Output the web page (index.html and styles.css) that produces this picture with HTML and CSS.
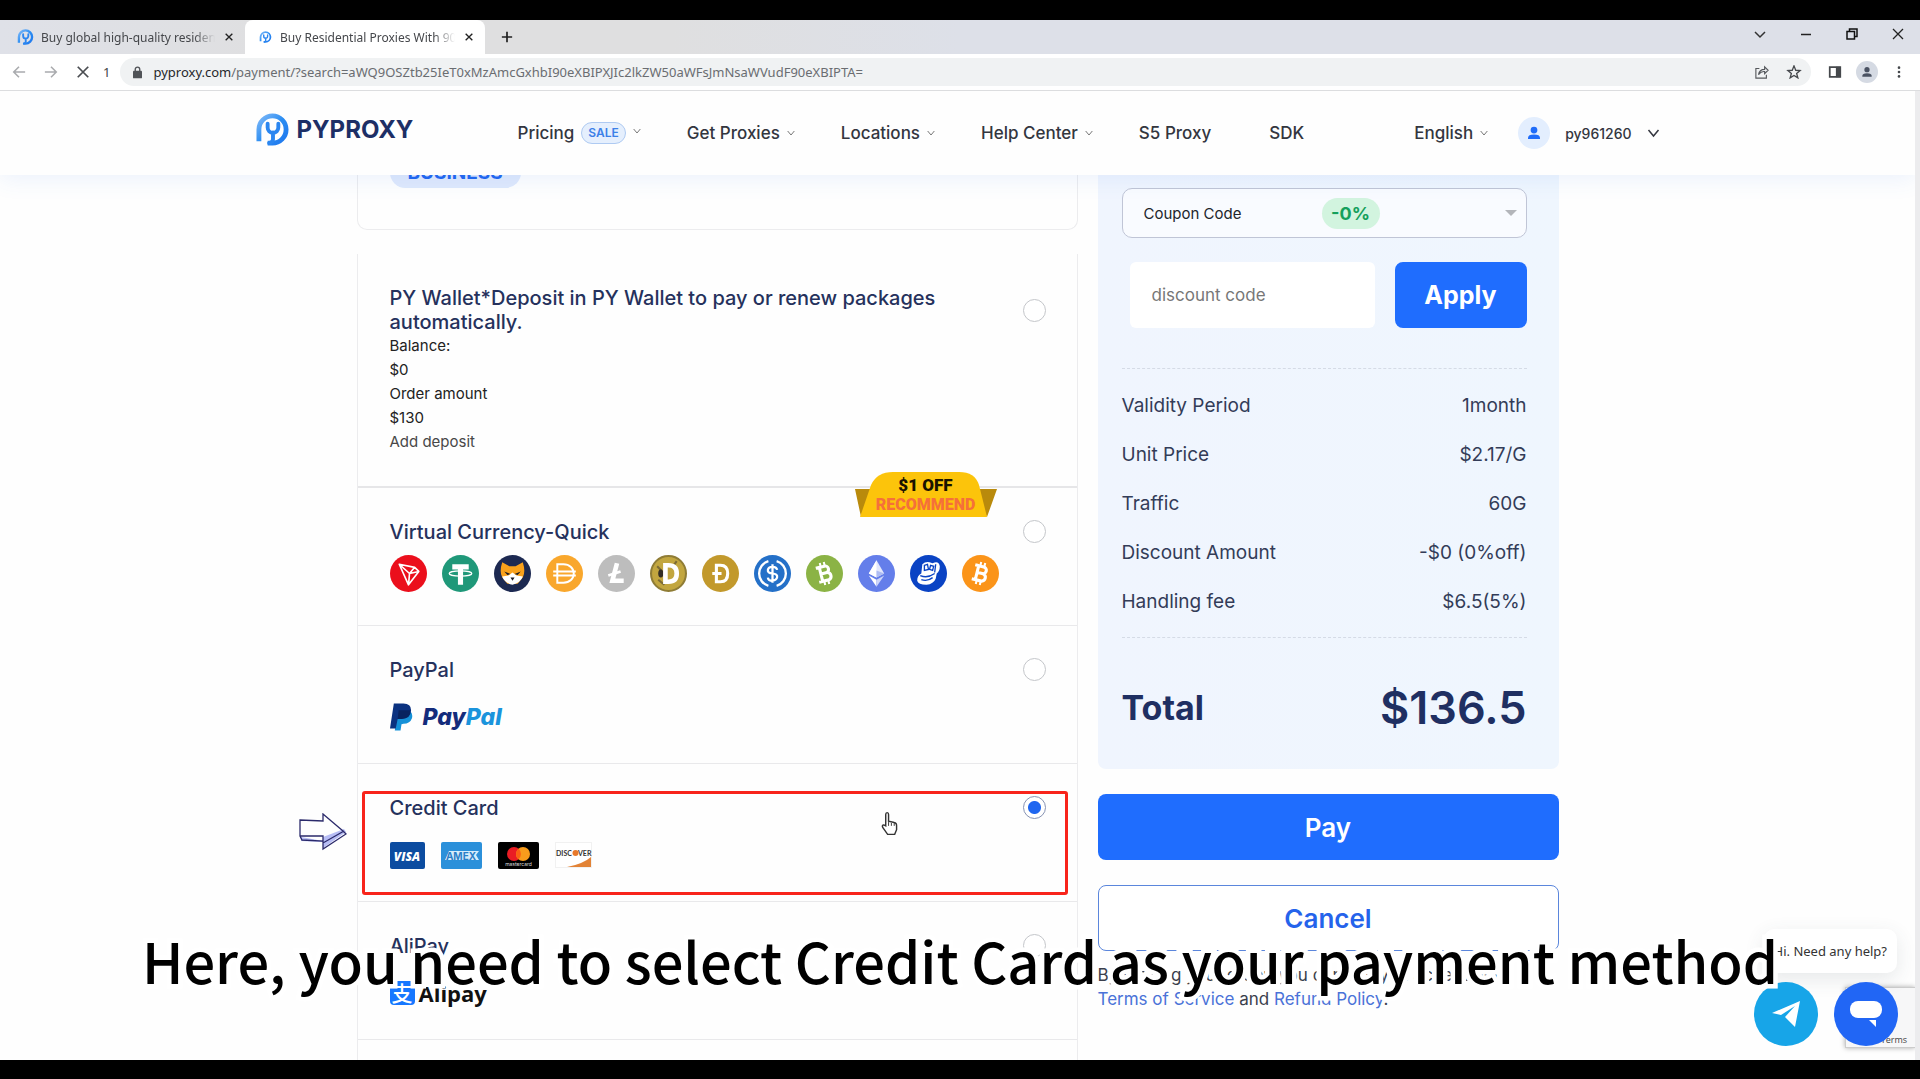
FILE: index.html
```html
<!DOCTYPE html>
<html lang="en">
<head>
    <meta charset="UTF-8">
    <meta name="viewport" content="width=device-width, initial-scale=1.0">
    <title>Buy Residential Proxies With 90M+ IPs</title>
    <link rel="stylesheet" href="styles.css">
</head>
<body>

    <!-- Shared icons -->
    <svg class="sprite" aria-hidden="true">
        <defs>
            <linearGradient id="logoBlue" x1="0" y1="0" x2="1" y2="1">
                <stop offset="0" stop-color="#7db8f8"/>
                <stop offset="0.5" stop-color="#2b8df2"/>
                <stop offset="1" stop-color="#1f78ee"/>
            </linearGradient>
        </defs>
        <symbol id="py" viewBox="0 0 34 34">
            <path d="M3 29V17a14 14 0 1 1 14 14h-5" fill="none" stroke="url(#logoBlue)" stroke-width="5"/>
            <path d="M12 11v4a5.500 5.500 0 0 0 11 0v-4M17.500 20v7q0 3-4 4" fill="none" stroke="#2b86f0" stroke-width="4" stroke-linecap="round"/>
        </symbol>
        <symbol id="chevron" viewBox="0 0 12 12">
            <path d="M1 3l5 6 5-6" fill="none" stroke="currentColor" stroke-width="1.500"/>
        </symbol>
        <symbol id="close" viewBox="0 0 12 12">
            <path d="M1 1l10 10M11 1L1 11" fill="none" stroke="currentColor" stroke-width="2"/>
        </symbol>
        <symbol id="person" viewBox="0 0 24 24">
            <circle cx="12" cy="8" r="4.500" fill="currentColor"/>
            <path d="M4 20v-1.500q0-4.500 8-4.500t8 4.500V20z" fill="currentColor"/>
        </symbol>
    </svg>

    <div class="browser">
        <div class="tabs">
            <div class="tab">
                <svg class="tab-icon"><use href="#py"/></svg>
                <span class="tab-title">Buy global high-quality residential</span>
                <button class="tab-close" aria-label="Close tab"><svg><use href="#close"/></svg></button>
            </div>
            <div class="tab active">
                <svg class="tab-icon small"><use href="#py"/></svg>
                <span class="tab-title">Buy Residential Proxies With 90M+</span>
                <button class="tab-close" aria-label="Close tab"><svg><use href="#close"/></svg></button>
            </div>
            <button class="new-tab" aria-label="New tab">
                <svg viewBox="0 0 14 14"><path d="M7 1v12M1 7h12" stroke="#222" stroke-width="2"/></svg>
            </button>
            <div class="window-btns">
                <button aria-label="Search tabs"><svg viewBox="0 0 12 12"><path d="M1 4l5 5 5-5" fill="none" stroke="#333" stroke-width="1.500"/></svg></button>
                <button aria-label="Minimize"><svg viewBox="0 0 12 12"><path d="M1 6.500h10" stroke="#222" stroke-width="1.500"/></svg></button>
                <button aria-label="Restore"><svg viewBox="0 0 12 12"><path d="M1 3.500h7.500V11H1zM3.500 3.500V1H11v7.500H8.500" fill="none" stroke="#111" stroke-width="1.500"/></svg></button>
                <button aria-label="Close"><svg viewBox="0 0 12 12"><path d="M1 1l10 10M11 1L1 11" stroke="#222" stroke-width="1.300"/></svg></button>
            </div>
        </div>

        <div class="toolbar">
            <button class="tool-btn" aria-label="Back"><svg viewBox="0 0 16 16"><path d="M15 8H2M8 2L2 8l6 6" fill="none" stroke="#a9abae" stroke-width="1.800"/></svg></button>
            <button class="tool-btn" aria-label="Forward"><svg viewBox="0 0 16 16"><path d="M1 8h13M8 2l6 6-6 6" fill="none" stroke="#a9abae" stroke-width="1.800"/></svg></button>
            <button class="tool-btn" aria-label="Stop"><svg viewBox="0 0 16 16"><path d="M2 2l12 12M14 2L2 14" stroke="#4a4d51" stroke-width="2"/></svg></button>
            <span class="tool-num">1</span>
            <div class="url-bar">
                <svg class="lock" viewBox="0 0 10 14"><path d="M2.500 6V3.500a2.500 2.500 0 0 1 5 0V6" fill="none" stroke="#505357" stroke-width="1.500"/><rect x="0" y="5" width="10" height="8.500" rx="1" fill="#505357"/></svg>
                <span class="url"><b>pyproxy.com</b>/payment/?search=aWQ9OSZtb25IeT0xMzAmcGxhbI90eXBIPXJIc2lkZW50aWFsJmNsaWVudF90eXBIPTA=</span>
                <button class="tool-btn" aria-label="Share"><svg viewBox="0 0 16 16"><path d="M5 4H1v11h12v-4M4 11q1-6 7-6V2l4 4-4 4V7.500Q7 7 4 11z" fill="none" stroke="#55585c" stroke-width="1.300"/></svg></button>
                <button class="tool-btn" aria-label="Bookmark"><svg viewBox="0 0 16 16"><path d="M8 1l2 5 5 .3-4 3.400 1.400 5L8 12l-4.400 2.700 1.400-5-4-3.400L6 6z" fill="none" stroke="#45484c" stroke-width="1.500"/></svg></button>
            </div>
            <button class="tool-btn" aria-label="Side panel"><svg viewBox="0 0 16 16"><path d="M2 2.500h12v11H2z" fill="none" stroke="#45484c" stroke-width="2"/><path d="M9 2h5v12H9z" fill="#45484c"/></svg></button>
            <button class="tool-btn profile" aria-label="Profile"><svg><use href="#person"/></svg></button>
            <button class="tool-btn" aria-label="Menu"><svg viewBox="0 0 16 16" fill="#45484c"><circle cx="8" cy="3" r="1.500"/><circle cx="8" cy="8" r="1.500"/><circle cx="8" cy="13" r="1.500"/></svg></button>
        </div>

        <div class="page">
            <header class="site-header">
                <div class="header-inner">
                    <a href="#" class="logo"><svg><use href="#py"/></svg>PYPROXY</a>
                    <nav class="nav">
                        <a href="#">Pricing <span class="sale">SALE</span> <svg class="chev up"><use href="#chevron"/></svg></a>
                        <a href="#">Get Proxies <svg class="chev"><use href="#chevron"/></svg></a>
                        <a href="#">Locations <svg class="chev"><use href="#chevron"/></svg></a>
                        <a href="#">Help Center <svg class="chev"><use href="#chevron"/></svg></a>
                        <a href="#" class="plain">S5 Proxy</a>
                        <a href="#">SDK</a>
                    </nav>
                    <a href="#" class="lang">English <svg class="chev"><use href="#chevron"/></svg></a>
                    <a href="#" class="user"><span class="avatar"><svg><use href="#person"/></svg></span>py961260 <svg class="user-chev"><use href="#chevron"/></svg></a>
                </div>
            </header>

            <main class="checkout">
                <section class="methods">
                    <div class="plan-card">
                        <span class="plan-badge">BUSINESS</span>
                    </div>

                    <form class="pay-list">
                        <label class="pay-row wallet">
                            <span class="pay-body">
                                <span class="pay-name">PY Wallet*Deposit in PY Wallet to pay or renew packages automatically.</span>
                                <span class="pay-line">Balance:</span>
                                <span class="pay-line">$0</span>
                                <span class="pay-line">Order amount</span>
                                <span class="pay-line">$130</span>
                                <a href="#" class="pay-line deposit">Add deposit</a>
                            </span>
                            <input type="radio" name="method">
                        </label>

                        <label class="pay-row crypto">
                            <span class="pay-body">
                                <span class="pay-name">Virtual Currency-Quick</span>
                                <span class="coins">
                                    <svg viewBox="0 0 36 36"><circle cx="18" cy="18" r="18" fill="#eb0f1c"/><path d="M9 9l15 3 4 4-10 13zM9 9l10 9 5-6M19 18l-1 11M19 18l9-2" fill="none" stroke="#fff" stroke-width="1.600" stroke-linejoin="round"/></svg>
                                    <svg viewBox="0 0 36 36"><circle cx="18" cy="18" r="18" fill="#1f9879"/><path d="M10 9h16v5h-5.500v15h-5V14H10z" fill="#fff"/><ellipse cx="18" cy="18" rx="11" ry="2.500" fill="none" stroke="#fff" stroke-width="1.200"/></svg>
                                    <svg viewBox="0 0 36 36"><circle cx="18" cy="18" r="18" fill="#1c2951"/><path d="M8 7l7 4h6l7-4q3 9 0 15l-5 6H13l-5-6Q5 16 8 7z" fill="#f9a11b"/><path d="M8 21l6-1 4-3 4 3 6 1q-2 6-10 8-8-2-10-8z" fill="#fff"/><path d="M10 16l6 2.500-3 1zM26 16l-6 2.500 3 1zM16 22h4l-2 3z" fill="#1b1b24"/></svg>
                                    <svg viewBox="0 0 36 36"><circle cx="18" cy="18" r="18" fill="#f9a72c"/><path d="M11 9h6c6 0 10 4 10 9s-4 9-10 9h-6zM7 16h22M7 20h22" fill="none" stroke="#fff" stroke-width="1.900"/></svg>
                                    <svg viewBox="0 0 36 36"><circle cx="18" cy="18" r="18" fill="#bdbdbd"/><path d="M18.500 8L14 25h11" fill="none" stroke="#fff" stroke-width="4.500"/><path d="M10 20l12-4" stroke="#fff" stroke-width="2.500"/></svg>
                                    <svg viewBox="0 0 36 36"><circle cx="18" cy="18" r="17" fill="#c2a63f" stroke="#8f7c35" stroke-width="2"/><path d="M7 11l4 4M26 6l-3 4M8 24l6 5" stroke="#7c6b35" stroke-width="2"/><ellipse cx="10.500" cy="18" rx="2.500" ry="4" fill="#342e25"/><path d="M15 10h3c6 0 8 3 8 8s-2 8-8 8h-3z" fill="none" stroke="#fff" stroke-width="4.500"/></svg>
                                    <svg viewBox="0 0 36 36"><circle cx="18" cy="18" r="18" fill="#c2992c"/><path d="M14 10h4c5 0 7 3 7 8s-2 8-7 8h-4zM10 18h9" fill="none" stroke="#fff" stroke-width="3"/></svg>
                                    <svg viewBox="0 0 36 36"><circle cx="18" cy="18" r="18" fill="#2470c8"/><path d="M14 6a12.500 12.500 0 0 0 0 24M22 6a12.500 12.500 0 0 1 0 24" fill="none" stroke="#fff" stroke-width="2.300"/><path d="M22.500 14.500q-.5-3-4.500-3t-4.500 3 4.500 3.500 4.500 3.500-4.500 3.500-4.500-3M18 9v18" fill="none" stroke="#fff" stroke-width="2.200"/></svg>
                                    <svg viewBox="0 0 36 36"><circle cx="18" cy="18" r="18" fill="#8bb345"/><g transform="rotate(-14 18 18)" fill="none" stroke="#fff" stroke-width="3"><path d="M14.500 11h5a3.300 3.300 0 0 1 0 6.700h-5zM14.500 17.700h6a3.700 3.700 0 0 1 0 7.300h-6zM11 11h4M11 25h4"/><path d="M16 7v4M20 7v4M16 25v4M20 25v4" stroke-width="2"/></g></svg>
                                    <svg viewBox="0 0 36 36"><circle cx="18" cy="18" r="18" fill="#647eea"/><path d="M18 5l7.500 13-7.500 4-7.500-4z" fill="#e2e7fc"/><path d="M18 5v17l-7.500-4zM10.500 20l7.500 4v7z" fill="#fff"/><path d="M25.500 20L18 24v7z" fill="#ccd5fa"/><path d="M18 15l7.500 3-7.500 4z" fill="#aebcf3"/></svg>
                                    <svg viewBox="0 0 36 36"><circle cx="18" cy="18" r="18" fill="#0a43c4"/><path d="M12 9q3-3 7-2l3 1q6-3 7 3 0 5-3 7l-1 5q-2 5-9 6-8 0-9-4 0-5 4-7z" fill="#fff"/><path d="M14 10l3-1 1 5-4 1zM20 10l3 1-1 4-3-1zM10 20q7 3 14-2M11 24q6 2 11-2M25 9l-1 8" fill="none" stroke="#0a43c4" stroke-width="1.300"/></svg>
                                    <svg viewBox="0 0 36 36"><circle cx="18" cy="18" r="18" fill="#fb9419"/><g transform="rotate(14 18 18)" fill="none" stroke="#fff" stroke-width="3"><path d="M14.500 11h5a3.300 3.300 0 0 1 0 6.700h-5zM14.500 17.700h6a3.700 3.700 0 0 1 0 7.300h-6zM11 11h4M11 25h4"/><path d="M16 7v4M20 7v4M16 25v4M20 25v4" stroke-width="2"/></g></svg>
                                </span>
                            </span>
                            <input type="radio" name="method">
                            <span class="ribbon">
                                <svg viewBox="0 0 142 46" aria-hidden="true">
                                    <path d="M0 18h24L6 46zM142 18h-24l14 28z" fill="#b98a0c"/>
                                    <path d="M5 46L16 14Q22 1 38 1h66q16 0 20 13l8 32z" fill="#fcc40b"/>
                                </svg>
                                <span class="ribbon-off">$1 OFF</span>
                                <span class="ribbon-rec">RECOMMEND</span>
                            </span>
                        </label>

                        <label class="pay-row">
                            <span class="pay-body">
                                <span class="pay-name">PayPal</span>
                                <span class="brand paypal">
                                    <svg viewBox="0 0 24 28" aria-hidden="true"><path d="M8 7h12q4 3 3 8-2 6-9 6l-2 .5L11 28H5z" fill="#1591d8"/><path d="M4 0h10q8 0 8 7 0 8-10 9H8L6 26H0z" fill="#0b3280"/><path d="M9 7h12q1 9-9 9H8z" fill="#08235f"/></svg>
                                    <i>Pay<em>Pal</em></i>
                                </span>
                            </span>
                            <input type="radio" name="method">
                        </label>

                        <label class="pay-row credit">
                            <span class="pay-body">
                                <span class="pay-name">Credit Card</span>
                                <span class="brand cards">
                                    <svg class="card-visa" viewBox="0 0 35 27"><rect width="35" height="27" rx="2" fill="#0c4ca0"/><text x="17" y="19" text-anchor="middle" class="visa-text">VISA</text></svg>
                                    <svg class="card-wide" viewBox="0 0 41 27"><rect width="41" height="27" rx="2" fill="#2b90da"/><path d="M8 9h30l-3 4 3 5H4z" fill="#d6ecfb"/><text x="20" y="18" text-anchor="middle" class="amex-text">AMEX</text></svg>
                                    <svg class="card-wide" viewBox="0 0 41 27"><rect width="41" height="27" rx="2"/><circle cx="16" cy="12" r="7" fill="#ea1c24"/><circle cx="25" cy="12" r="7" fill="#f89c1c"/><path d="M20.500 6.700a7 7 0 0 1 0 10.600 7 7 0 0 1 0-10.600z" fill="#fb5f13"/><text x="20.500" y="24" text-anchor="middle" class="mc-text">mastercard</text></svg>
                                    <svg class="card-disc" viewBox="0 0 37 27"><rect x=".5" y=".5" width="36" height="25" fill="#fff" stroke="#f1f1f1"/><text x="1" y="14" class="disc-text">DISC</text><circle cx="20.500" cy="11" r="3" fill="#e8792b"/><text x="23" y="14" class="disc-text">VER</text><path d="M12 25q16-3 24-10v10z" fill="#e28336"/></svg>
                                </span>
                            </span>
                            <input type="radio" name="method" checked>
                            <span class="highlight"></span>
                            <svg class="pointer-arrow" viewBox="0 0 48 38" aria-hidden="true"><path d="M2 24v4l22 1v-5l21-8 2 3-23 16V28" fill="#b7bdf5"/><path d="M1 7l23 1V1l20 17 3 3-23 15v-8L3 27l-2-4zM1 23h23v7l21-12" fill="none" stroke="#2b2a6b" stroke-width="1.300"/></svg>
                            <svg class="hand" viewBox="0 0 18 25" aria-hidden="true"><path d="M5 15V3q0-2 1.500-2T8 3v7l6 1.500q2.500.5 2.500 3V19l-2 5H7l-5-7q-1.500-3 1-3z" fill="#fff" stroke="#333" stroke-width="1.500"/><path d="M8 15v-4M11 15v-3M14 15v-3" stroke="#333"/></svg>
                        </label>

                        <label class="pay-row">
                            <span class="pay-body">
                                <span class="pay-name">AliPay</span>
                                <span class="brand alipay"><b class="ali-mark">支</b>Alipay</span>
                            </span>
                            <input type="radio" name="method">
                        </label>
                    </form>
                </section>

                <aside class="summary">
                    <div class="order">
                        <button class="coupon">
                            <span>Coupon Code</span>
                            <span class="percent">-0%</span>
                            <svg class="caret" viewBox="0 0 12 6"><path d="M0 0h12L6 6z" fill="#b3b5ba"/></svg>
                        </button>
                        <div class="discount">
                            <input type="text" placeholder="discount code" aria-label="discount code">
                            <button class="apply">Apply</button>
                        </div>
                        <dl class="details">
                            <div><dt>Validity Period</dt><dd>1month</dd></div>
                            <div><dt>Unit Price</dt><dd>$2.17/G</dd></div>
                            <div><dt>Traffic</dt><dd>60G</dd></div>
                            <div><dt>Discount Amount</dt><dd>-$0 (0%off)</dd></div>
                            <div><dt>Handling fee</dt><dd>$6.5(5%)</dd></div>
                        </dl>
                        <div class="total"><span>Total</span><strong>$136.5</strong></div>
                    </div>
                    <button class="pay-btn">Pay</button>
                    <button class="cancel-btn">Cancel</button>
                    <p class="terms">By making your order, you confirm you accept our <a href="#">Terms of Service</a> and <a href="#">Refund Policy</a>.</p>
                </aside>
            </main>

            <div class="recaptcha">Terms</div>
            <div class="help-bubble">Hi. Need any help?</div>
            <div class="help-btns">
                <a href="#" class="telegram" aria-label="Telegram"><svg viewBox="0 0 30 28"><path d="M1 13L29 1l-5 26-10-10 10-11-14 9z" fill="#fff"/></svg></a>
                <button class="chat" aria-label="Chat"><svg viewBox="0 0 32 28"><rect x="0" y="1" width="32" height="17" rx="8" fill="#fff"/><path d="M19 20h7v7z" fill="#fff"/></svg></button>
            </div>
        </div>
    </div>

    <p class="caption">Here, you need to select Credit Card as your payment method</p>

</body>
</html>
```
FILE: styles.css
```css
* {
    box-sizing: border-box;
}

body {
    font-family: Inter, "Open Sans", sans-serif;
    background-color: #000;
    color: #222b45;
    margin: 0;
    height: 100vh;
    padding: 20px 0 19px;
    overflow: hidden;
}

button {
    font-family: inherit;
    border: none;
    background: none;
    padding: 0;
    cursor: pointer;
}

a {
    color: inherit;
    text-decoration: none;
}

svg {
    display: block;
    flex: none;
}

.sprite {
    position: absolute;
    width: 0;
    height: 0;
}

.browser {
    height: 100%;
    display: flex;
    flex-direction: column;
    background-color: #fefefe;
    overflow: hidden;
}

/* Tab strip */
.tabs {
    display: flex;
    align-items: center;
    height: 34px;
    background: linear-gradient(90deg, #dfe1e8, #dfdfe0 15%, #dfdfe0 35%, #dde0e8 50%);
    font-family: "Noto Sans", sans-serif;
    font-size: 12px;
    color: #45474b;
}

.tab {
    display: flex;
    align-items: center;
    width: 245px;
    height: 34px;
    padding: 0 9px 0 17px;
    gap: 7px;
}

.tab.active {
    background-color: #fff;
    border-radius: 8px 8px 0 0;
    width: 240px;
    padding-left: 13px;
}

.tab-icon {
    width: 17px;
    height: 16px;
}

.tab-icon.small {
    width: 15px;
    height: 12px;
}

.tab-title {
    flex: 1;
    overflow: hidden;
    white-space: nowrap;
    -webkit-mask-image: linear-gradient(90deg, #000 88%, transparent);
    mask-image: linear-gradient(90deg, #000 88%, transparent);
}

.tab-close {
    width: 14px;
    display: flex;
    justify-content: center;
    color: #222;
}

.tab-close svg {
    width: 8px;
    height: 8px;
}

.new-tab {
    width: 44px;
    display: flex;
    justify-content: center;
}

.new-tab svg {
    width: 12px;
    height: 12px;
}

.window-btns {
    display: flex;
    margin-left: auto;
    gap: 34px;
    padding: 0 16px 6px 0;
}

.window-btns svg {
    width: 12px;
    height: 12px;
}

/* Toolbar */
.toolbar {
    display: flex;
    align-items: center;
    height: 37px;
    background-color: #fff;
    border-bottom: 1px solid #dcdddf;
    padding: 0 13px 0 11px;
    gap: 16px;
}

.tool-btn svg {
    width: 16px;
    height: 14px;
}

.tool-num {
    font-family: "Noto Sans", sans-serif;
    font-size: 13px;
    color: #444;
    margin: 0 -6px 0 -4px;
}

.url-bar {
    flex: 1;
    display: flex;
    align-items: center;
    gap: 16px;
    height: 28px;
    padding: 0 9px 0 13px;
    border-radius: 14px;
    background-color: #f0f2f3;
}

.lock {
    width: 9px;
    height: 13px;
}

.url {
    flex: 1;
    font-family: "Noto Sans", sans-serif;
    font-size: 13px;
    color: #6a6d71;
    margin-left: -5px;
    white-space: nowrap;
    overflow: hidden;
}

.url b {
    font-weight: normal;
    color: #26282b;
}

.profile {
    width: 22px;
    height: 22px;
    border-radius: 50%;
    background-color: #d5dae3;
    color: #4a5262;
    display: flex;
    align-items: center;
    justify-content: center;
    margin: 0 -3px;
}

/* Page area */
.page {
    flex: 1;
    min-height: 0;
    position: relative;
    overflow: hidden;
    border-right: 5px solid #ececee;
}

.site-header {
    position: relative;
    z-index: 1;
    height: 84px;
    background-color: #fefefe;
    box-shadow: 0 4px 22px rgba(70, 130, 240, 0.1);
}

.header-inner {
    display: flex;
    align-items: center;
    max-width: 1404px;
    height: 84px;
    margin: 0 auto;
    font-size: 17px;
    font-weight: 500;
    color: #33363f;
}

.logo {
    display: flex;
    align-items: center;
    gap: 8px;
    width: 262px;
    font-size: 24px;
    font-weight: 700;
    color: #1d2f66;
    padding-bottom: 7px;
}

.logo svg {
    width: 33px;
    height: 33px;
}

.nav {
    display: flex;
    gap: 46px;
}

.nav a, .lang, .user {
    display: flex;
    align-items: center;
    gap: 7px;
}

.nav .plain {
    margin-right: 12px;
}

.sale {
    font-size: 12px;
    font-weight: 600;
    line-height: 20px;
    padding: 0 6px;
    color: #3c80e8;
    background-color: #e5effd;
    border: 1px solid #aecaf2;
    border-radius: 12px;
}

.chev {
    width: 8px;
    height: 8px;
    color: #777;
}

.chev.up {
    margin-bottom: 4px;
}

.lang {
    margin-left: auto;
    margin-right: 30px;
}

.user {
    font-size: 14px;
    font-weight: 500;
    gap: 15px;
}

.avatar {
    width: 32px;
    height: 32px;
    border-radius: 50%;
    background-color: #e3eefe;
    color: #1f6cf9;
    display: flex;
    align-items: center;
    justify-content: center;
}

.avatar svg {
    width: 20px;
    height: 18px;
}

.user-chev {
    width: 13px;
    height: 12px;
}

/* Checkout */
.checkout {
    display: grid;
    grid-template-columns: minmax(0, 721fr) minmax(0, 461fr);
    align-items: start;
    gap: 20px;
    max-width: 1202px;
    margin: 0 auto;
}

.plan-card {
    display: flow-root;
    height: 55px;
    border: 1px solid #ececee;
    border-top: none;
    border-radius: 0 0 10px 10px;
    padding-left: 32px;
    margin-bottom: 24px;
}

.plan-badge {
    display: block;
    width: fit-content;
    margin-top: -18px;
    padding: 0 18px;
    line-height: 31px;
    border-radius: 16px;
    background-color: #dfe9fc;
    color: #1f66f0;
    font-size: 19px;
    font-weight: 700;
}

.pay-list {
    border: 1px solid #ececee;
    border-top: none;
    height: 830px;
}

.pay-row {
    position: relative;
    display: flex;
    justify-content: space-between;
    min-height: 138px;
    padding: 32px 31px 0 32px;
    border-bottom: 1px solid #e9e9eb;
}

.wallet {
    min-height: 234px;
    border-bottom: 2px solid #e6e6e8;
}

.crypto {
    border-radius: 10px 10px 0 0;
}

.pay-body {
    display: flex;
    flex-direction: column;
    max-width: 560px;
}

.pay-name {
    font-size: 20px;
    font-weight: 500;
    line-height: 24px;
    color: #25315c;
}

.pay-line {
    font-size: 15px;
    line-height: 24px;
    color: #222;
}

.deposit {
    color: #484848;
}

.pay-row input {
    appearance: none;
    flex: none;
    width: 23px;
    height: 23px;
    margin: 0;
    border: 1px solid #c4c6ca;
    border-radius: 50%;
    background-color: #fff;
}

.wallet input {
    margin-top: 13px;
}

.pay-row input:checked {
    border-color: #8793b3;
    background: radial-gradient(circle, #1f66f0 6px, #fff 7px);
}

.coins {
    display: flex;
    gap: 15px;
    margin-top: 11px;
}

.coins svg {
    width: 37px;
    height: 37px;
}

.brand {
    display: flex;
    align-items: center;
    height: 38px;
    margin-top: 16px;
}

.paypal {
    gap: 10px;
    font-size: 23px;
    font-weight: 800;
    color: #142c7c;
}

.paypal svg {
    width: 23px;
    height: 28px;
}

.paypal em {
    color: #1b94dc;
}

.cards {
    gap: 16px;
}

.card-visa {
    width: 35px;
    height: 27px;
}

.card-wide {
    width: 41px;
    height: 27px;
}

.card-disc {
    width: 37px;
    height: 27px;
}

.visa-text {
    font: italic 800 12px "Open Sans", sans-serif;
    fill: #fff;
}

.amex-text {
    font: 700 10px Inter, sans-serif;
    fill: #2b7fc8;
}

.mc-text {
    font: 5px Inter, sans-serif;
    fill: #ddd;
}

.disc-text {
    font: 700 7px Lato, sans-serif;
    fill: #333;
}

.alipay {
    gap: 4px;
    color: #111;
    font-family: "Open Sans", sans-serif;
    font-size: 22px;
    font-weight: 700;
}

.ali-mark {
    width: 25px;
    height: 24px;
    border-radius: 4px;
    background-color: #1677ff;
    color: #fff;
    font: 500 21px/22px "Noto Sans CJK SC", sans-serif;
    text-align: center;
}

.ribbon {
    position: absolute;
    top: -17px;
    right: 80px;
    width: 142px;
    height: 46px;
    padding-top: 4px;
    text-align: center;
    font-family: Roboto, sans-serif;
    font-weight: 900;
    font-size: 17px;
    line-height: 20px;
    color: #1a1200;
}

.ribbon svg {
    position: absolute;
    inset: 0;
    width: 142px;
    height: 46px;
}

.ribbon-off, .ribbon-rec {
    display: block;
    position: relative;
}

.ribbon-rec {
    color: #f5703a;
    font-size: 16px;
}

.highlight {
    position: absolute;
    inset: 27px 9px 6px 4px;
    border: 3px solid #f8241b;
    border-radius: 3px;
}

.pointer-arrow {
    position: absolute;
    left: -59px;
    top: 49px;
    width: 48px;
    height: 38px;
}

.hand {
    position: absolute;
    right: 179px;
    top: 47px;
    width: 17px;
    height: 25px;
}

/* Order summary */
.order {
    background: linear-gradient(90deg, #f0f5fe, #eff6fe);
    border-radius: 0 0 8px 8px;
    height: 594px;
    padding: 13px 32px 0 24px;
}

.coupon {
    position: relative;
    display: grid;
    grid-template-columns: 13fr auto 10fr;
    align-items: center;
    width: 100%;
    height: 50px;
    padding: 0 9px 0 21px;
    border: 1px solid #c0c5d6;
    border-radius: 10px;
    background-color: #f9fbff;
    font-size: 15px;
    text-align: left;
    color: #22252c;
}

.percent {
    width: 58px;
    line-height: 31px;
    border-radius: 16px;
    background-color: #d2f4df;
    color: #15a05c;
    font-size: 18px;
    font-weight: 700;
    text-align: center;
}

.caret {
    width: 12px;
    height: 6px;
    justify-self: end;
}

.discount {
    display: flex;
    gap: 20px;
    padding: 24px 0 40px 8px;
    border-bottom: 1px dashed #d5dbe6;
}

.discount input {
    flex: 1;
    min-width: 0;
    height: 66px;
    border: none;
    border-radius: 6px;
    padding: 0 22px;
    background-color: #fff;
    font: 17px Inter, sans-serif;
    color: #333;
}

.discount input::placeholder {
    color: #777;
}

.apply, .pay-btn, .cancel-btn {
    height: 66px;
    border-radius: 8px;
    background-color: #1f6dfe;
    color: #fff;
    font-size: 25px;
    font-weight: 700;
}

.apply {
    width: 132px;
}

.details {
    margin: 0;
    padding: 12px 0 11px;
    border-bottom: 1px dashed #d5dbe6;
}

.details div {
    display: flex;
    justify-content: space-between;
    font-size: 19px;
    line-height: 49px;
    color: #333c58;
}

.details dd {
    margin: 0;
}

.total {
    display: flex;
    align-items: center;
    justify-content: space-between;
    height: 138px;
    color: #1f2f62;
    font-size: 34px;
    font-weight: 700;
}

.total strong {
    font-size: 45px;
    font-weight: 600;
}

.pay-btn, .cancel-btn {
    display: block;
    width: 100%;
    margin-top: 25px;
    font-size: 26px;
    font-weight: 600;
}

.cancel-btn {
    background-color: #fff;
    border: 1px solid #5b86dc;
    color: #2563eb;
}

.terms {
    margin: 12px 0 0;
    max-width: 450px;
    font-size: 17px;
    line-height: 24px;
    color: #3a3f4c;
}

.terms a {
    color: #4a72d8;
}

/* Floating help */
.recaptcha {
    position: absolute;
    right: 0;
    bottom: 12px;
    width: 70px;
    height: 61px;
    padding: 46px 8px 0 0;
    border: 1px solid #ccc;
    border-right: none;
    background-color: #f7f7f8;
    box-shadow: 0 0 5px #aaa;
    font-family: "Open Sans", sans-serif;
    font-size: 9px;
    line-height: 12px;
    text-align: right;
    color: #444;
}

.help-bubble {
    position: absolute;
    right: 18px;
    bottom: 87px;
    padding: 0 10px;
    line-height: 44px;
    border-radius: 10px;
    background-color: #fff;
    box-shadow: 0 6px 20px rgba(60, 70, 80, 0.12);
    font-family: "Noto Sans", sans-serif;
    font-size: 13px;
    color: #333;
}

.help-btns {
    position: absolute;
    right: 17px;
    bottom: 14px;
    display: flex;
    gap: 16px;
}

.telegram, .chat {
    display: flex;
    align-items: center;
    justify-content: center;
    width: 64px;
    height: 64px;
    border-radius: 50%;
    background-color: #17a5e8;
}

.chat {
    background-color: #2166f5;
}

.help-btns svg {
    width: 32px;
    height: 28px;
}

/* Subtitle over the page */
.caption {
    position: absolute;
    left: 0;
    right: 0;
    bottom: 77px;
    z-index: 5;
    margin: 0;
    text-align: center;
    white-space: nowrap;
    font-family: "Noto Sans CJK SC", sans-serif;
    font-size: 56px;
    font-weight: 500;
    line-height: 84px;
    color: #000;
    -webkit-text-stroke: 9px #fff;
    stroke-linejoin: round;
    paint-order: stroke fill;
}
```
